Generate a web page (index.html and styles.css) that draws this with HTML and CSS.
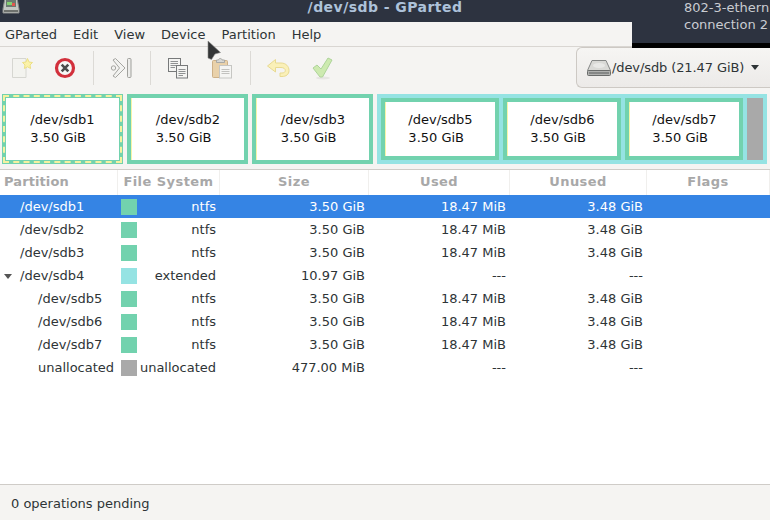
FILE: index.html
```html
<!DOCTYPE html>
<html lang="en">

<head>
    <meta charset="UTF-8">
    <title>/dev/sdb - GParted</title>
    <link rel="stylesheet" href="styles.css">
</head>

<body>
    <div id="window">
        <div id="titlebar">
            <svg class="app-icon" width="18" height="14" viewBox="0 0 18 14">
                <path d="M3 -2H15L17 9V13H1V9Z" fill="#c4c7c3" stroke="#8a8c89" stroke-width="1" />
                <rect x="4" y="0" width="10" height="7" fill="#6b7a70" />
                <rect x="5" y="2" width="5" height="3" fill="#84cf72" />
                <rect x="10" y="3" width="3" height="3" fill="#e0564e" />
                <rect x="2" y="10" width="14" height="2" fill="#6e716d" />
            </svg>
            <span class="title-text">/dev/sdb - GParted</span>
        </div>

        <ul id="menubar">
            <li>GParted</li>
            <li>Edit</li>
            <li>View</li>
            <li>Device</li>
            <li>Partition</li>
            <li>Help</li>
        </ul>

        <div id="toolbar">
            <div class="tools">
                <svg class="tool" width="24" height="24" viewBox="0 0 24 24">
                    <path d="M3.5 2.5H17V21.5H3.5Z" fill="#f3f3ef" stroke="#d6d6d1" />
                    <path d="M18.5 2.5L20 6L23.5 6.5L21 9L21.6 12.5L18.5 10.8L15.4 12.5L16 9L13.5 6.5L17 6Z" fill="#fbf2a8" stroke="#ecdf84" />
                </svg>
                <svg class="tool" width="24" height="24" viewBox="0 0 24 24">
                    <circle cx="12" cy="12" r="8.5" fill="#f7f7f5" stroke="#d2303c" stroke-width="3.2" />
                    <path d="M8.7 8.7L15.3 15.3M15.3 8.7L8.7 15.3" stroke="#4c4c4c" stroke-width="2.6" />
                </svg>
                <i class="tool-sep"></i>
                <svg class="tool tool-wide" width="25" height="24" viewBox="0 0 25 24">
                    <path d="M4 4L6.5 2.5L16 12L6.5 21.5L4 20L10.5 12Z" fill="#f2f2f0" stroke="#a5a5a1" />
                    <circle cx="4.5" cy="12" r="2.2" fill="#f2f2f0" stroke="#a5a5a1" />
                    <rect x="18.5" y="2.5" width="3.5" height="19" rx="1" fill="#ececea" stroke="#a0a09c" />
                </svg>
                <i class="tool-sep"></i>
                <svg class="tool" width="24" height="24" viewBox="0 0 24 24">
                    <rect x="2.5" y="2.5" width="12" height="13" fill="#f4f4f2" stroke="#77797a" />
                    <path d="M4.5 5.5H12M4.5 7.5H12M4.5 9.5H12M4.5 11.5H9" stroke="#8f9192" />
                    <rect x="10.5" y="9.5" width="11" height="12.5" fill="#f4f4f2" stroke="#77797a" />
                    <path d="M12.5 13.5H19.5M12.5 15.5H19.5M12.5 17.5H19.5M12.5 19.5H17" stroke="#8f9192" />
                </svg>
                <svg class="tool" width="24" height="24" viewBox="0 0 24 24">
                    <rect x="2.5" y="4.5" width="15" height="17" rx="1" fill="#e9d1aa" stroke="#cdb088" />
                    <path d="M6.5 6.5V4H8.5C8.5 2 12 2 12 4H14.5V6.5Z" fill="#d8d8d5" stroke="#a9a9a5" />
                    <rect x="9.5" y="9.5" width="12" height="12.5" fill="#f5f5f3" stroke="#c6c6c3" />
                    <path d="M11.5 13.5H19.5M11.5 15.5H19.5M11.5 17.5H19.5" stroke="#c2c2bf" />
                </svg>
                <i class="tool-sep"></i>
                <svg class="tool" width="24" height="24" viewBox="0 0 24 24">
                    <path d="M1.5 10L9.5 3.5V7H15C20 7 23 10.5 23 14.5C23 18.5 20 20.5 16 20.5H14V17H16C18 17 19.3 16 19.3 14.5C19.3 12.7 17.5 11.5 15 11.5H9.5V16Z" fill="#faf0b8" stroke="#e8da92" />
                </svg>
                <svg class="tool tool-last" width="24" height="24" viewBox="0 0 24 24">
                    <ellipse cx="13" cy="22" rx="7" ry="1.5" fill="#e6e5e2" />
                    <path d="M3 12L7 9L11 13L18 2L22 4L12.5 21H10Z" fill="#cdeab0" stroke="#aed49a" />
                </svg>
            </div>
            <div class="device-combo">
                <svg width="24" height="16" viewBox="0 0 24 16">
                    <path d="M5 .5H19L23.5 10.5H.5Z" fill="#d9d9d6" stroke="#858786" />
                    <ellipse cx="12" cy="5.5" rx="6" ry="2.5" fill="#e8e8e6" />
                    <rect x=".5" y="10.5" width="23" height="5" rx="1" fill="#b0b1af" stroke="#6a6c6b" />
                    <rect x="2" y="12" width="20" height="2" fill="#858786" />
                </svg>
                <span class="combo-text">/dev/sdb (21.47 GiB)</span>
                <i class="combo-arrow"></i>
            </div>
        </div>

        <div id="disk-map">
            <div class="part part-primary selected"><div class="part-inner"><p>/dev/sdb1<br>3.50 GiB</p></div></div>
            <div class="part part-primary"><div class="part-inner"><p>/dev/sdb2<br>3.50 GiB</p></div></div>
            <div class="part part-primary"><div class="part-inner"><p>/dev/sdb3<br>3.50 GiB</p></div></div>
            <div class="part-extended">
                <div class="part part-logical"><div class="part-inner"><p>/dev/sdb5<br>3.50 GiB</p></div></div>
                <div class="part part-logical"><div class="part-inner"><p>/dev/sdb6<br>3.50 GiB</p></div></div>
                <div class="part part-logical"><div class="part-inner"><p>/dev/sdb7<br>3.50 GiB</p></div></div>
                <div class="part-free"></div>
            </div>
        </div>

        <div id="tree">
            <div class="tree-head tree-cols">
                <div class="head-first">Partition</div>
                <div>File System</div>
                <div>Size</div>
                <div>Used</div>
                <div>Unused</div>
                <div>Flags</div>
            </div>
            <div class="row tree-cols selected-row">
                <div class="name">/dev/sdb1</div>
                <div class="fs"><i class="swatch ntfs"></i>ntfs</div>
                <div class="num">3.50 GiB</div>
                <div class="num">18.47 MiB</div>
                <div class="num">3.48 GiB</div>
                <div></div>
            </div>
            <div class="row tree-cols">
                <div class="name">/dev/sdb2</div>
                <div class="fs"><i class="swatch ntfs"></i>ntfs</div>
                <div class="num">3.50 GiB</div>
                <div class="num">18.47 MiB</div>
                <div class="num">3.48 GiB</div>
                <div></div>
            </div>
            <div class="row tree-cols">
                <div class="name">/dev/sdb3</div>
                <div class="fs"><i class="swatch ntfs"></i>ntfs</div>
                <div class="num">3.50 GiB</div>
                <div class="num">18.47 MiB</div>
                <div class="num">3.48 GiB</div>
                <div></div>
            </div>
            <div class="row tree-cols">
                <div class="name"><i class="expander"></i>/dev/sdb4</div>
                <div class="fs"><i class="swatch extended"></i>extended</div>
                <div class="num">10.97 GiB</div>
                <div class="num">---</div>
                <div class="num">---</div>
                <div></div>
            </div>
            <div class="row tree-cols">
                <div class="name child">/dev/sdb5</div>
                <div class="fs"><i class="swatch ntfs"></i>ntfs</div>
                <div class="num">3.50 GiB</div>
                <div class="num">18.47 MiB</div>
                <div class="num">3.48 GiB</div>
                <div></div>
            </div>
            <div class="row tree-cols">
                <div class="name child">/dev/sdb6</div>
                <div class="fs"><i class="swatch ntfs"></i>ntfs</div>
                <div class="num">3.50 GiB</div>
                <div class="num">18.47 MiB</div>
                <div class="num">3.48 GiB</div>
                <div></div>
            </div>
            <div class="row tree-cols">
                <div class="name child">/dev/sdb7</div>
                <div class="fs"><i class="swatch ntfs"></i>ntfs</div>
                <div class="num">3.50 GiB</div>
                <div class="num">18.47 MiB</div>
                <div class="num">3.48 GiB</div>
                <div></div>
            </div>
            <div class="row tree-cols">
                <div class="name child">unallocated</div>
                <div class="fs"><i class="swatch free"></i>unallocated</div>
                <div class="num">477.00 MiB</div>
                <div class="num">---</div>
                <div class="num">---</div>
                <div></div>
            </div>
        </div>

        <div id="statusbar">0 operations pending</div>

        <!-- desktop notification lying over the window -->
        <div id="notification">
            <div class="note-body">802-3-ethern<br>connection 2</div>
        </div>

        <svg id="cursor" width="16" height="22" viewBox="0 0 16 22">
            <path d="M1 1L13.5 12.5L8 14L4.5 19.5L1 18Z" fill="#333536" stroke="#8a8a88" stroke-width=".6" />
        </svg>
    </div>
</body>

</html>
```

FILE: styles.css
```css
* {
    margin: 0;
    padding: 0;
    box-sizing: border-box;
}

ul {
    list-style: none;
}

body {
    font-family: "DejaVu Sans", sans-serif;
    font-size: 13px;
    color: #2e3436;
    background: #f5f4f2;
}

#window {
    position: relative;
    width: 770px;
    height: 520px;
    overflow: hidden;
    display: flex;
    flex-direction: column;
}

/* title bar */

#titlebar {
    height: 22px;
    background: #2d3340;
    display: flex;
    justify-content: center;
    flex-shrink: 0;
    position: relative;
}

.title-text {
    font-size: 14px;
    font-weight: bold;
    line-height: 15px;
    color: #adc2da;
    letter-spacing: .45px;
}

.app-icon {
    position: absolute;
    left: 2px;
    top: 0;
}

/* menu */

#menubar {
    height: 25px;
    padding: 0 5px;
    display: flex;
    gap: 16px;
    align-items: center;
    border-bottom: 1px solid #d9d6d2;
    flex-shrink: 0;
}

/* toolbar */

#toolbar {
    height: 47px;
    display: flex;
    justify-content: space-between;
    flex-shrink: 0;
}

.tools {
    display: flex;
    align-items: center;
    height: 42px;
    padding: 4px 0 4px 9px;
}

.tool {
    margin-right: 20px;
}

.tool-wide,
.tool-last {
    margin-right: 0;
}

.tool-sep {
    width: 1px;
    height: 34px;
    background: #dcdad6;
    margin-left: -4px;
    margin-right: 15px;
}

.tool-wide + .tool-sep {
    margin-left: 16px;
}

.device-combo {
    width: 194px;
    height: 41px;
    padding-left: 10px;
    display: flex;
    align-items: center;
    gap: 1px;
    border: 1px solid #cdc9c4;
    border-right: none;
    border-radius: 6px 0 0 6px;
    background: linear-gradient(#f6f5f3, #eceae8);
    flex-shrink: 0;
}

.combo-text {
    letter-spacing: -.1px;
}

.combo-arrow {
    margin-left: 6px;
    border-left: 4px solid transparent;
    border-right: 4px solid transparent;
    border-top: 5px solid #2e3436;
}

/* partition map */

#disk-map {
    height: 70px;
    padding: 0 2px;
    display: flex;
    gap: 4px;
    flex-shrink: 0;
}

.part {
    border: 4px solid #72d2ae;
    position: relative;
}

.part-primary {
    width: 121px;
}

.part-logical {
    width: 118px;
}

.part-inner {
    height: 100%;
    background: #fff;
    border-left: 1px solid #f6f5a8;
    display: flex;
    align-items: center;
    justify-content: center;
    color: #111;
    line-height: 18px;
}

.part.selected {
    outline: 2px dashed #f4f2a0;
    outline-offset: -3px;
}

.part.selected .part-inner {
    border-left: none;
}

.part-extended {
    width: 390px;
    padding: 4px;
    display: flex;
    gap: 4px;
    background: #95e3e3;
}

.part-free {
    width: 16px;
    background: #a9a9a9;
}

/* partition list */

.tree-cols {
    display: grid;
    grid-template-columns: 118px 102px 149px 141px 137px 123px;
}

#tree {
    flex: 1;
    margin-top: 5px;
    background: #fff;
    border-top: 1px solid #cfccc8;
}

.tree-head {
    height: 25px;
    color: #a8a8a8;
    font-weight: bold;
    letter-spacing: .45px;
    line-height: 24px;
    text-align: center;
}

.tree-head div {
    border-right: 1px solid #f0efed;
}

.tree-head .head-first {
    text-align: left;
    padding-left: 4px;
    letter-spacing: .1px;
}

.row {
    height: 23px;
    line-height: 23px;
}

.selected-row {
    background: #3584e4;
    color: #fff;
}

.name {
    padding-left: 20px;
    white-space: nowrap;
    position: relative;
}

.name.child {
    padding-left: 38px;
}

.expander {
    position: absolute;
    left: 4px;
    top: 10px;
    border-left: 4px solid transparent;
    border-right: 4px solid transparent;
    border-top: 5px solid #555;
}

.fs {
    display: flex;
    justify-content: space-between;
    align-items: center;
    padding: 0 4px 0 3px;
}

.swatch {
    width: 16px;
    height: 16px;
}

.swatch.ntfs {
    background: #72d2ae;
}

.swatch.extended {
    background: #95e3e3;
}

.swatch.free {
    background: #a9a9a9;
}

.num {
    text-align: right;
    padding-right: 4px;
}

/* status bar */

#statusbar {
    height: 36px;
    padding-left: 11px;
    line-height: 37px;
    border-top: 1px solid #cfccc8;
    flex-shrink: 0;
}

/* overlays */

#notification {
    position: absolute;
    right: 0;
    top: 0;
    width: 138px;
    height: 48px;
    background: #000;
    overflow: hidden;
}

.note-body {
    height: 44px;
    margin-top: -1px;
    padding: 0 0 0 52px;
    background: #2d3340;
    color: #c9ccd2;
    font-size: 13px;
    line-height: 17px;
    white-space: nowrap;
}

#cursor {
    position: absolute;
    left: 207px;
    top: 40px;
}
```
